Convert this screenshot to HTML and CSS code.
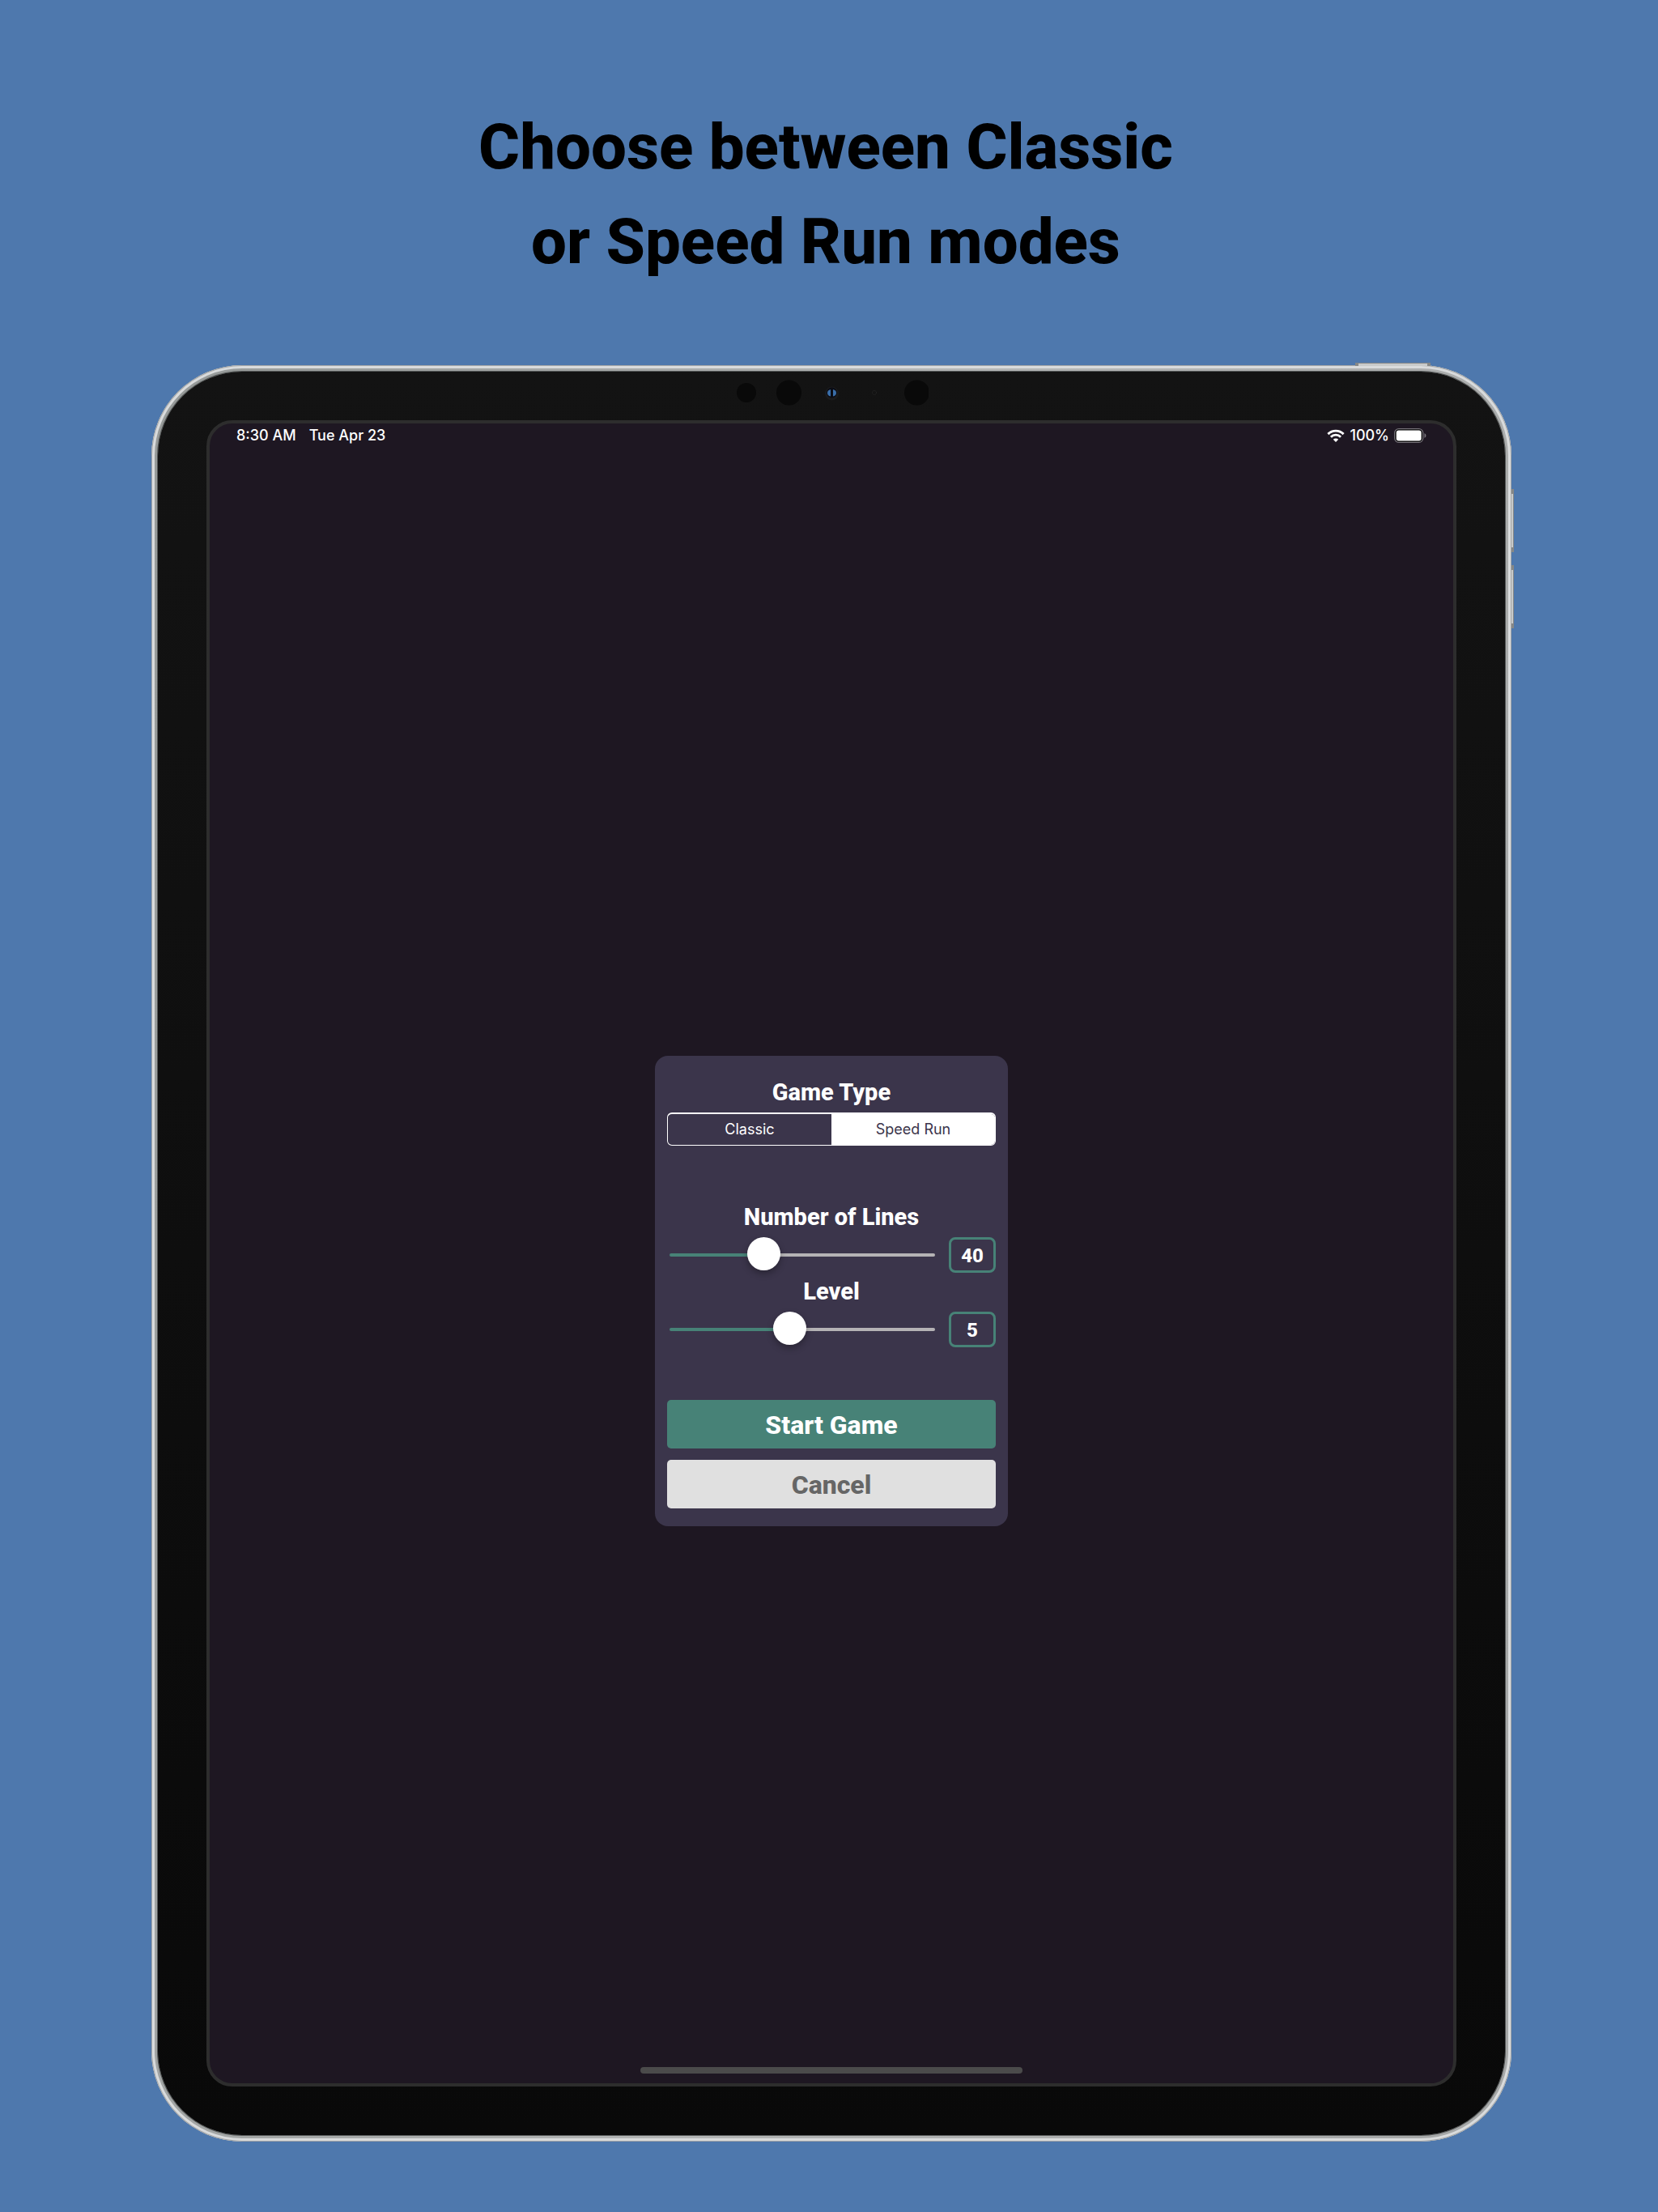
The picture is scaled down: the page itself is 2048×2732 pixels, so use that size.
FILE: index.html
```
<!DOCTYPE html>
<html lang="en">
<head>
    <meta charset="utf-8">
    <title>Game Type</title>
    <link rel="stylesheet" href="styles.css">
</head>
<body>
    <h1 class="headline">Choose between Classic<br>or Speed Run modes</h1>

    <div class="device">
        <span class="key key-power"></span>
        <span class="key key-up"></span>
        <span class="key key-down"></span>
        <div class="bezel">
            <div class="sensors">
                <svg width="240" height="32" viewBox="0 0 240 32">
                    <circle cx="15" cy="16" r="12" fill="#090909"/>
                    <circle cx="67.5" cy="16" r="15.5" fill="#090909"/>
                    <circle cx="120.5" cy="17" r="8.5" fill="#1b1b1c"/>
                    <circle cx="120.5" cy="16" r="6.5" fill="#0b0c14"/>
                    <path d="M119 12q-4 1-4 4.3t4 4.3z" fill="#3a6ea8"/>
                    <path d="M122 12q4 1 4 4.3t-4 4.3z" fill="#3a6ea8"/>
                    <circle cx="173" cy="16" r="2.5" fill="none" stroke="#2a2a2a" stroke-dasharray="1 1"/>
                    <circle cx="225.5" cy="16" r="15.5" fill="#090909"/>
                </svg>
            </div>
            <div class="screen">
                <div class="status-bar">
                    <span>8:30 AM</span>
                    <span>Tue Apr 23</span>
                    <div class="status-right">
                        <svg width="22" height="16" viewBox="0 0 22 16" fill="none" stroke="#fff" stroke-width="2.9">
                            <path d="M1.4 6.1a13.6 13.6 0 0 1 19.2 0"/>
                            <path d="M4.9 9.7a8.6 8.6 0 0 1 12.2 0"/>
                            <path d="M11 16l-3.2-3.3a4.6 4.6 0 0 1 6.4 0z" fill="#fff" stroke="none"/>
                        </svg>
                        <span>100%</span>
                        <svg width="40" height="18" viewBox="0 0 40 18">
                            <rect x=".7" y=".7" width="35" height="16.6" rx="5" fill="#000" stroke="#77737a" stroke-width="1.3"/>
                            <rect x="2.7" y="2.5" width="31" height="13" rx="3" fill="#fff"/>
                            <path d="M37.5 6q2 1 2 3t-2 3z" fill="#77737a"/>
                        </svg>
                    </div>
                </div>

                <main class="stage">
                    <form class="card">
                        <fieldset class="group">
                            <legend class="title">Game Type</legend>
                            <div class="segmented">
                                <label class="segment"><input type="radio" name="type" value="classic">Classic</label>
                                <label class="segment"><input type="radio" name="type" value="speed" checked>Speed Run</label>
                            </div>
                        </fieldset>

                        <div class="group">
                            <label class="title" for="lines">Number of Lines</label>
                            <div class="row">
                                <input class="slider" style="--fill: 33%" type="range" id="lines" min="10" max="100" value="40">
                                <output class="value" for="lines">40</output>
                            </div>
                            <label class="title" for="level">Level</label>
                            <div class="row">
                                <input class="slider" style="--fill: 44%" type="range" id="level" min="1" max="10" value="5">
                                <output class="value" for="level">5</output>
                            </div>
                        </div>

                        <div class="actions">
                            <button class="btn btn-start" type="button">Start Game</button>
                            <button class="btn btn-cancel" type="button">Cancel</button>
                        </div>
                    </form>
                </main>
                <div class="home-indicator"></div>
            </div>
        </div>
    </div>

<script>
// keep the green part of the track and the number box in step with the thumb
document.querySelectorAll('.slider').forEach((slider) => {
    slider.addEventListener('input', () => {
        const fill = (slider.value - slider.min) / (slider.max - slider.min) * 100;
        slider.style.setProperty('--fill', fill + '%');
        slider.nextElementSibling.textContent = slider.value;
    });
});
</script>
</body>
</html>
```
FILE: styles.css
```
* {
    box-sizing: border-box;
}
body {
    margin: 0;
    min-height: 100vh;
    padding: 123px 181px 87px 187px;
    display: flex;
    flex-direction: column;
    background: #4e78ad;
    font-family: Inter, "Liberation Sans", sans-serif;
    color: #fff;
}
.headline, .title, .value, .btn {
    font-family: Roboto, "Liberation Sans", sans-serif;
    font-weight: 800;
}
.headline {
    margin: 0 14px 94px 0;
    font-size: 78px;
    line-height: 117px;
    text-align: center;
    color: #000;
}

/* tablet */
.device {
    position: relative;
    flex: 1;
    display: flex;
    padding: 8px;
    border-radius: 112px;
    background: linear-gradient(100deg, #959998, #b4b6b6 50%, #a5a7a7);
    box-shadow: inset 0 0 0 1px #a3a5a6, inset 0 0 0 4px #d9dbdc;
}
.key {
    position: absolute;
    background: #c8caca;
    border: 1px solid #858787;
}
.key-power {
    top: -3px;
    right: 100px;
    width: 93px;
    height: 4px;
    border-width: 1px 4px 0;
}
.key-up, .key-down {
    right: -3px;
    width: 3px;
    height: 78px;
    border-width: 6px 1px 6px 0;
}
.key-up { top: 153px; }
.key-down { top: 247px; }
.bezel {
    flex: 1;
    display: flex;
    flex-direction: column;
    padding: 0 60px 60px;
    border-radius: 104px;
    background: linear-gradient(#131313, #090909);
    box-shadow: 0 0 0 1px #565959;
}
.sensors {
    height: 60px;
    padding-top: 10px;
    text-align: center;
}
.screen {
    flex: 1;
    display: flex;
    flex-direction: column;
    border: 4px solid #2d2d2d;
    border-radius: 32px;
    background: #1e1722;
}
.status-bar {
    display: flex;
    align-items: center;
    gap: 16px;
    padding: 4px 33px 0;
    font-size: 18px;
    font-weight: 500;
    line-height: 22px;
}
.status-right {
    margin-left: auto;
    display: flex;
    align-items: center;
    gap: 6px;
}
.stage {
    flex: 1;
    display: flex;
    align-items: center;
    justify-content: center;
    padding-top: 87px;
}
.home-indicator {
    width: 472px;
    height: 8px;
    margin: 0 auto 12px;
    border-radius: 4px;
    background: #4b4b4b;
}

/* game type card */
.card {
    width: 436px;
    padding: 22px 15px;
    display: flex;
    flex-direction: column;
    gap: 65px;
    border-radius: 16px;
    background: #3b354b;
}
.group {
    min-width: 0;
    margin: 0;
    padding: 0;
    border: 0;
}
.title {
    display: block;
    width: 100%;
    padding: 0 0 2px;
    font-size: 29px;
    line-height: 46px;
    text-align: center;
}
.segmented {
    display: grid;
    grid-template-columns: 1fr 1fr;
    height: 41px;
    border: 1px solid #fff;
    border-top-width: 2px;
    border-radius: 6px;
    overflow: hidden;
}
.segment {
    position: relative;
    font-size: 18px;
    line-height: 38px;
    text-align: center;
    cursor: pointer;
}
.segment input {
    position: absolute;
    opacity: 0;
}
.segment:has(:checked) {
    background: #fff;
    color: #3b354b;
}
.row {
    display: flex;
    align-items: center;
    gap: 17px;
    padding-left: 3px;
}
.slider {
    -webkit-appearance: none;
    appearance: none;
    flex: 1;
    min-width: 0;
    height: 44px;
    margin: 0;
    background: none;
}
.slider::-webkit-slider-runnable-track {
    height: 4px;
    border-radius: 2px;
    background: linear-gradient(90deg, #478277 var(--fill), #b5b3b5 var(--fill));
}
.slider::-webkit-slider-thumb {
    -webkit-appearance: none;
    width: 41px;
    height: 41px;
    margin-top: -20px;
    border-radius: 50%;
    background: #fff;
    box-shadow: 0 4px 8px rgba(0, 0, 0, 0.3);
}
.value {
    width: 58px;
    height: 44px;
    border: 3px solid #478277;
    border-radius: 8px;
    font-size: 24px;
    line-height: 40px;
    text-align: center;
}
.actions {
    display: grid;
    gap: 14px;
}
.btn {
    height: 60px;
    padding: 2px 0 0;
    border: 0;
    border-radius: 5px;
    font-size: 32px;
    cursor: pointer;
}
.btn-start {
    background: #478277;
    color: #fff;
}
.btn-cancel {
    background: #e0e0e0;
    color: #666;
}
```
